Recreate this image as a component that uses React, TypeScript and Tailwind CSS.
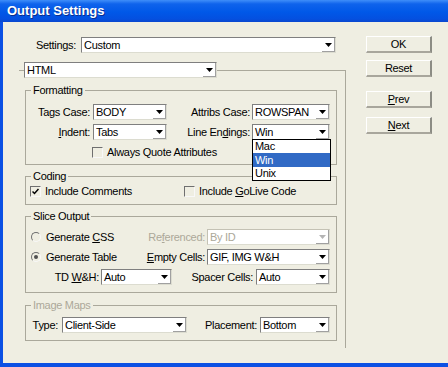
import React from 'react';

type SelectProps = {
  value: string;
  className?: string;
  disabled?: boolean;
  children?: React.ReactNode;
};

const Arrow = ({ disabled }: { disabled?: boolean }) => (
  <div className="w-[13px] shrink-0 flex items-center justify-center bg-white border-r border-b border-[#a0a0a0]">
    <svg width="7" height="4" viewBox="0 0 7 4">
      <path d="M0 0h7L3.5 4z" fill={disabled ? '#b4b4b4' : '#000'} />
    </svg>
  </div>
);

const Select = ({ value, className = '', disabled, children }: SelectProps) => (
  <div
    className={`relative flex shrink-0 h-[16px] bg-white border border-t-[#7f7f7f] border-l-[#7f7f7f] border-r-[#dcdcd0] border-b-[#dcdcd0] ${className}`}
  >
    <span className={`flex-1 pl-[2px] leading-[14px] whitespace-nowrap overflow-hidden ${disabled ? 'text-[#aca899]' : ''}`}>
      {value}
    </span>
    <Arrow disabled={disabled} />
    {children}
  </div>
);

const Checkbox = ({ checked }: { checked?: boolean }) => (
  <span className="w-[11px] h-[11px] shrink-0 flex items-center justify-center border border-t-[#6f6f6f] border-l-[#6f6f6f] border-r-[#f8f8f8] border-b-[#f8f8f8]">
    {checked && (
      <svg width="7" height="7" viewBox="0 0 7 7">
        <path d="M0.5 3.5l2 2 4-4.5" stroke="#000" strokeWidth="1.5" fill="none" />
      </svg>
    )}
  </span>
);

const Radio = ({ checked }: { checked?: boolean }) => (
  <span className="w-[10px] h-[10px] shrink-0 rounded-full flex items-center justify-center border border-t-[#6f6f6f] border-l-[#6f6f6f] border-r-[#f8f8f8] border-b-[#f8f8f8]">
    {checked && <span className="w-[4px] h-[4px] rounded-full bg-[#505050]" />}
  </span>
);

const Button = ({ children, className = '' }: { children: React.ReactNode; className?: string }) => (
  <div
    className={`w-[66px] h-[17px] flex items-center justify-center border-t border-l border-t-white border-l-white border-r-2 border-b-2 border-r-[#8c8c84] border-b-[#a8a69c] ${className}`}
  >
    {children}
  </div>
);

const Group = ({ title, disabled, className = '', children }: { title: string; disabled?: boolean; className?: string; children: React.ReactNode }) => (
  <fieldset className={`border border-[#aaa89b] ${className}`}>
    <legend className={`ml-[5px] px-[2px] leading-[13px] ${disabled ? 'text-[#aca899]' : ''}`}>{title}</legend>
    {children}
  </fieldset>
);

export default function App() {
  return (
    <div className="w-[448px] h-[367px] flex flex-col overflow-hidden bg-[#0b50e4] font-['Liberation_Sans',Arial,sans-serif] text-[11px] tracking-[-0.3px] whitespace-nowrap text-black">
      <div className="h-[22px] shrink-0 flex items-center pl-[7px] bg-[linear-gradient(to_bottom,#3f8ef9_0%,#0f63ec_18%,#0058e8_55%,#0450e0_85%,#0a47cf_100%)]">
        <span className="text-white font-bold text-[13px] tracking-normal [text-shadow:1px_1px_0_#0b2d8e]">Output Settings</span>
      </div>

      <div className="flex-1 ml-[3px] mb-[4px] flex bg-[#efeee2]">
        <div className="w-[363px] pt-[15px]">
          <div className="flex items-center h-[16px]">
            <span className="w-[73px] text-right">Settings:</span>
            <Select value="Custom" className="ml-[5px] w-[255px]" />
          </div>

          <fieldset className="ml-[16px] mt-[9px] w-[327px] border-t border-r border-[#aaa89b]">
            <legend className="ml-[5px]">
              <Select value="HTML" className="w-[193px] h-[15px]" />
            </legend>
            <div className="pl-[6px] pr-[8px] pb-[7px]">
              <Group title="Formatting" className="mt-[6px]">
                <div className="pt-[7px] pb-[5px]">
                  <div className="flex items-center h-[16px]">
                    <span className="w-[67px] pr-[3px] text-right">Tags Case:</span>
                    <Select value="BODY" className="w-[74px]" />
                    <span className="w-[85px] pr-[2px] text-right">Attribs Case:</span>
                    <Select value="ROWSPAN" className="w-[78px]" />
                  </div>
                  <div className="flex items-center h-[16px] mt-[4px]">
                    <span className="w-[67px] pr-[3px] text-right">
                      <span className="underline">I</span>ndent:
                    </span>
                    <Select value="Tabs" className="w-[74px]" />
                    <span className="w-[85px] pr-[2px] text-right">
                      Line En<span className="underline">d</span>ings:
                    </span>
                    <Select value="Win" className="w-[78px]">
                      <div className="absolute left-[-1px] top-full w-[79px] z-10 bg-white border border-black">
                        <div className="h-[13px] leading-[13px] pl-[2px]">Mac</div>
                        <div className="h-[14px] leading-[14px] pl-[2px] bg-[#316ac5] text-white">Win</div>
                        <div className="h-[13px] leading-[13px] pl-[2px]">Unix</div>
                      </div>
                    </Select>
                  </div>
                  <div className="flex items-center h-[13px] mt-[6px] pl-[66px]">
                    <Checkbox />
                    <span className="ml-[4px]">Always Quote Attributes</span>
                  </div>
                </div>
              </Group>

              <Group title="Coding" className="mt-[5px]">
                <div className="pt-[2px] pb-[6px] flex items-center h-[21px] pl-[4px]">
                  <div className="w-[154px] flex items-center">
                    <Checkbox checked />
                    <span className="ml-[4px]">Include Comments</span>
                  </div>
                  <Checkbox />
                  <span className="ml-[4px]">
                    Include <span className="underline">G</span>oLive Code
                  </span>
                </div>
              </Group>

              <Group title="Slice Output" className="mt-[5px]">
                <div className="pt-[6px] pb-[7px]">
                  <div className="flex items-center h-[16px]">
                    <div className="w-[117px] pl-[5px] flex items-center">
                      <Radio />
                      <span className="ml-[5px]">
                        Generate <span className="underline">C</span>SS
                      </span>
                    </div>
                    <span className="w-[64px] pr-[2px] text-right text-[#aca899]">
                      Re<span className="underline">f</span>erenced:
                    </span>
                    <Select value="By ID" disabled className="w-[123px] border-t-[#c4c2b4] border-l-[#c4c2b4]" />
                  </div>
                  <div className="flex items-center h-[16px] mt-[4px]">
                    <div className="w-[117px] pl-[5px] flex items-center">
                      <Radio checked />
                      <span className="ml-[5px]">Generate Table</span>
                    </div>
                    <span className="w-[64px] pr-[2px] text-right">
                      <span className="underline">E</span>mpty Cells:
                    </span>
                    <Select value="GIF, IMG W&H" className="w-[123px]" />
                  </div>
                  <div className="flex items-center h-[16px] mt-[4px]">
                    <span className="w-[75px] pr-[2px] text-right">
                      TD <span className="underline">W</span>&H:
                    </span>
                    <Select value="Auto" className="w-[71px]" />
                    <span className="w-[84px] pr-[3px] text-right">Spacer Cells:</span>
                    <Select value="Auto" className="w-[74px]" />
                  </div>
                </div>
              </Group>

              <Group title="Image Maps" disabled className="mt-[6px]">
                <div className="pt-[5px] pb-[7px] flex items-center h-[28px]">
                  <span className="w-[36px] pr-[4px] text-right">Type:</span>
                  <Select value="Client-Side" className="w-[125px]" />
                  <span className="w-[73px] pr-[3px] text-right">Placement:</span>
                  <Select value="Bottom" className="w-[70px]" />
                </div>
              </Group>
            </div>
          </fieldset>
        </div>

        <div className="pt-[14px] flex flex-col">
          <Button>OK</Button>
          <Button className="mt-[7px]">Reset</Button>
          <Button className="mt-[14px]">
            <span className="underline">P</span>rev
          </Button>
          <Button className="mt-[9px]">
            <span className="underline">N</span>ext
          </Button>
        </div>
      </div>
    </div>
  );
}
